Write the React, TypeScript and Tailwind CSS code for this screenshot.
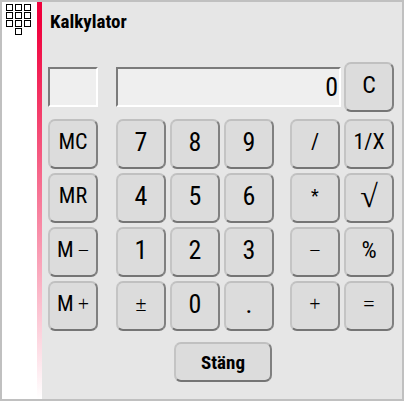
import React from 'react';

interface KeyProps {
  label: string;
  className?: string;
  children: React.ReactNode;
}

const narrow = "font-['Liberation_Sans_Narrow','Roboto_Condensed','Liberation_Sans',sans-serif]";
const symbol = "font-['Liberation_Serif',serif]";
const bevel =
  'rounded-[7px] border-2 border-t-[#c0c0c0] border-l-[#c4c4c4] border-r-[#808080] border-b-[#757575] bg-[#dcdcdc]';
const sunken =
  'h-10 border-2 border-t-[#7b7b7b] border-l-[#7b7b7b] border-r-white border-b-white bg-[#efefef] outline-none';

const digit = `${narrow} text-[26px]`;
const letter = `${narrow} text-[22px]`;
const sign = `${symbol} text-xl`;

const Key: React.FC<KeyProps> = ({ label, className = '', children }) => (
  <button
    type="button"
    aria-label={label}
    className={`flex h-[50px] w-[50px] items-center justify-center pb-1 leading-none ${bevel} ${className}`}
  >
    {children}
  </button>
);

const KeypadIcon: React.FC = () => (
  <svg className="mx-auto mt-0.5 block" width="25" height="31" viewBox="0 0 25 31" fill="none" stroke="black" shapeRendering="crispEdges">
    {[0, 8, 16].map((y) =>
      [0, 9, 18].map((x) => <rect key={`${x}-${y}`} x={x + 0.5} y={y + 0.5} width="6" height="6" />)
    )}
    <rect x="9.5" y="24.5" width="6" height="6" />
  </svg>
);

const App: React.FC = () => {
  return (
    <div className="flex min-h-screen border-2 border-[#c0c0c0] bg-[#e6e6e6] text-black">
      <aside className="w-[35px] shrink-0 bg-white pr-0.5">
        <KeypadIcon />
      </aside>
      <div className="w-[5px] shrink-0 bg-linear-to-b/srgb from-[#f0003c] from-5% to-white" />
      <main className="flex-1 pl-[6px]">
        <h1 className={`${narrow} pt-2 pl-0.5 text-[19px] leading-6 font-bold`}>Kalkylator</h1>

        <div className="w-[346px] pt-7">
          <div className="flex items-center">
            <input aria-label="Minne" readOnly className={`mr-[18px] w-[50px] ${sunken}`} />
            <input
              aria-label="Resultat"
              readOnly
              value="0"
              className={`w-[225px] pr-px text-right ${digit} ${sunken}`}
            />
            <Key label="Rensa" className={`ml-auto ${narrow} text-2xl`}>C</Key>
          </div>

          <div className="flex pt-[7px]">
            <div className="mr-[18px] grid gap-1">
              <Key label="MC" className={letter}>MC</Key>
              <Key label="MR" className={letter}>MR</Key>
              <Key label="M minus" className={letter}>
                M<span className={`${sign} pl-1`}>−</span>
              </Key>
              <Key label="M plus" className={letter}>
                M<span className={`${sign} pl-1`}>+</span>
              </Key>
            </div>

            <div className="grid grid-cols-3 gap-1">
              <Key label="7" className={digit}>7</Key>
              <Key label="8" className={digit}>8</Key>
              <Key label="9" className={digit}>9</Key>
              <Key label="4" className={digit}>4</Key>
              <Key label="5" className={digit}>5</Key>
              <Key label="6" className={digit}>6</Key>
              <Key label="1" className={digit}>1</Key>
              <Key label="2" className={digit}>2</Key>
              <Key label="3" className={digit}>3</Key>
              <Key label="Byt tecken" className={sign}>±</Key>
              <Key label="0" className={digit}>0</Key>
              <Key label="Decimal" className={digit}>.</Key>
            </div>

            <div className="ml-auto grid grid-cols-2 gap-1">
              <Key label="Dividera" className={letter}>/</Key>
              <Key label="Invertera" className={letter}>1/X</Key>
              <Key label="Multiplicera" className={`${narrow} text-lg`}>*</Key>
              <Key label="Kvadratrot" className={`${symbol} text-[32px]`}>√</Key>
              <Key label="Subtrahera" className={sign}>−</Key>
              <Key label="Procent" className={`${narrow} text-2xl`}>%</Key>
              <Key label="Addera" className={sign}>+</Key>
              <Key label="Lika med" className={sign}>=</Key>
            </div>
          </div>

          <div className="flex justify-center pt-[11px] pl-1">
            <button type="button" className={`h-10 w-[98px] ${narrow} text-[19px] leading-none font-bold ${bevel}`}>
              Stäng
            </button>
          </div>
        </div>
      </main>
    </div>
  );
};

export default App;
